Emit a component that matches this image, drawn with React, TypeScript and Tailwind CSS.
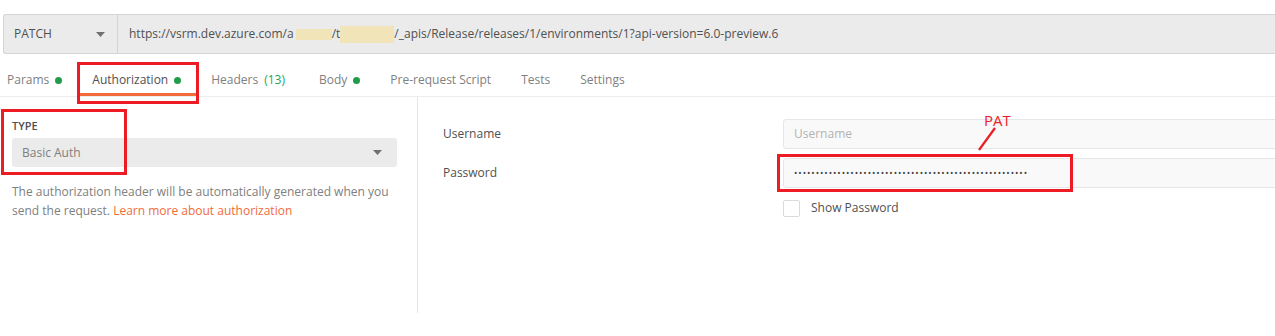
import { Fragment } from 'react'

const tabs = [
  { label: 'Params', dot: true },
  { label: 'Authorization', dot: true, active: true },
  { label: 'Headers', count: '(13)' },
  { label: 'Body', dot: true },
  { label: 'Pre-request Script' },
  { label: 'Tests' },
  { label: 'Settings' },
]

function Caret({ className }: { className?: string }) {
  return (
    <svg width="9" height="5" viewBox="0 0 9 5" className={className}>
      <path d="M0 0h9L4.5 5z" fill="#707070" />
    </svg>
  )
}

function Dot() {
  return <span className="ml-[6px] inline-block h-[7px] w-[7px] rounded-full bg-[#1f9d4b]" />
}

export default function App() {
  return (
    <div className="relative h-[336px] w-[1275px] overflow-hidden bg-white font-['Open_Sans',sans-serif]">
      {/* request bar */}
      <div className="pl-[3px] pt-[14px]">
        <div className="flex h-[40px] rounded-l-[3px] border-y border-l border-[#d4d4d4] bg-[#ebebeb]">
          <div className="flex w-[114px] items-center justify-between border-r border-[#d4d4d4] pl-[10px] pr-[12px]">
            <span className="text-[12px] text-[#505050]">PATCH</span>
            <Caret />
          </div>
          <div className="flex items-center whitespace-pre pl-[11px] text-[12px] text-[#505050]">
            https://vsrm.dev.azure.com/a
            <span className="ml-[2px] inline-block h-[11px] w-[36px] bg-[#f1e4b9]" />
            /t
            <span className="inline-block h-[17px] w-[54px] bg-[#f1e4b9]" />
            /_apis/Release/releases/1/environments/1?api-version=6.0-preview.6
          </div>
        </div>
      </div>

      {/* tabs */}
      <div className="flex h-[43px] border-b border-[#ececec] pl-[7px]">
        {tabs.map((t, i) => (
          <Fragment key={t.label}>
            <div
              className={
                'flex items-start border-b-[3px] pt-[17px] text-[12px] ' +
                (i === 0 ? 'pr-[15px] ' : t.count ? 'pl-[15px] pr-[19px] ' : 'px-[15px] ') +
                (t.active ? 'border-[#f26b3a] text-[#505050]' : 'border-transparent text-[#808080]')
              }
            >
              <span className="flex items-center leading-[18px]">
                {t.label}
                {t.dot && <Dot />}
                {t.count && <span className="ml-[6px] text-[#26a65b]">{t.count}</span>}
              </span>
            </div>
          </Fragment>
        ))}
      </div>

      {/* body */}
      <div className="flex">
        <div className="h-[216px] w-[418px] border-r border-[#e6e6e6] px-[12px] pt-[22px]">
          <div className="text-[11px] font-semibold leading-[14px] text-[#505050]">TYPE</div>
          <div className="mt-[5px] flex h-[29px] w-[385px] items-center justify-between rounded-[3px] bg-[#ebebeb] pl-[10px] pr-[15px]">
            <span className="pt-[1px] text-[12px] text-[#808080]">Basic Auth</span>
            <Caret />
          </div>
          <p className="mt-[15px] text-[12px] leading-[19px] text-[#808080]">
            The authorization header will be automatically generated when you send the request.{' '}
            <span className="text-[#f26b3a]">Learn more about authorization</span>
          </p>
        </div>

        <div className="flex-1 pl-[25px] pt-[22px]">
          <div className="flex items-center">
            <span className="w-[340px] text-[12px] text-[#505050]">Username</span>
            <div className="-mr-[3px] flex h-[30px] flex-1 items-center rounded-[3px] border border-[#e6e6e6] bg-[#f9f9f9] pl-[10px] text-[12px] text-[#b3b3b3]">
              Username
            </div>
          </div>
          <div className="mt-[9px] flex items-center">
            <span className="w-[340px] text-[12px] text-[#505050]">Password</span>
            <div className="-mr-[3px] flex h-[30px] flex-1 items-center overflow-hidden rounded-[3px] border border-[#e6e6e6] bg-[#f9f9f9] pl-[10px] text-[9px] tracking-[0.95px] text-[#404040]">
              {'•'.repeat(54)}
            </div>
          </div>
          <div className="ml-[340px] mt-[11px] flex items-center">
            <span className="h-[17px] w-[17px] rounded-[2px] border border-[#dadada] bg-white" />
            <span className="ml-[11px] text-[12px] text-[#505050]">Show Password</span>
          </div>
        </div>
      </div>

      {/* annotations */}
      <div className="absolute left-[77px] top-[62px] h-[42px] w-[122px] border-[3px] border-[#ed1c24]" />
      <div className="absolute left-[1px] top-[109px] h-[66px] w-[126px] border-[3px] border-[#ed1c24]" />
      <div className="absolute left-[777px] top-[154px] h-[38px] w-[296px] border-[3px] border-[#ed1c24]" />
      <span className="absolute left-[984px] top-[109px] text-[15px] text-[#ed1c24]">PAT</span>
      <svg className="absolute left-[975px] top-[125px]" width="24" height="28" viewBox="0 0 24 28">
        <path d="M4 25L20 3" stroke="#ed1c24" strokeWidth="2.2" />
      </svg>
    </div>
  )
}
